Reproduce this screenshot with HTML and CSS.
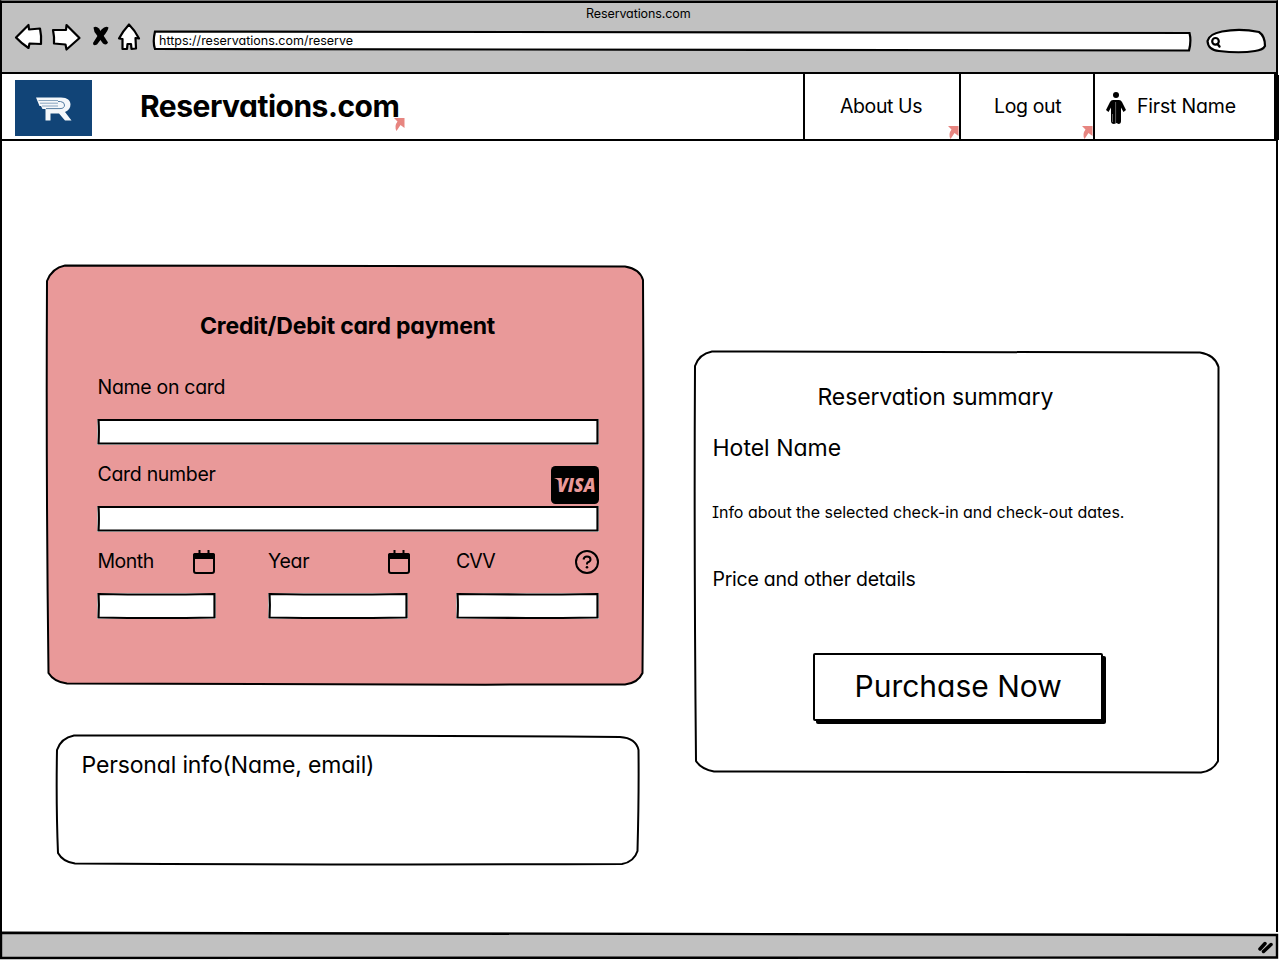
FILE: index.html
```html
<!DOCTYPE html>
<html lang="en">
<head>
<meta charset="utf-8">
<title>Reservations.com</title>
<link rel="stylesheet" href="styles.css">
</head>
<body>
<div class="window">
  <div class="toolbar">
    <div class="window-title"><span class="t-window">Reservations.com</span></div>
    <div class="controls">
      <svg class="nav-icons" width="130" height="34" viewBox="12 20 130 34">
        <g fill="#fff" stroke="#000" stroke-width="2.2" stroke-linejoin="round">
          <path d="M16 37.500 L28.500 25 L29 29.500 L40 28.500 Q41.500 35 41 44 L29.500 43.500 L28.500 48 Q21 43 16 37.500Z"/>
          <path d="M53 30 L66 30 L66.500 25 L79.500 38 L66.500 49.500 L65.500 44.500 L54 43.500 Q54.500 37 53 30Z"/>
          <path d="M129 24.500 Q135 30.500 139 38.500 L135.500 38 L136 48.500 L131.500 49 L131 44 L127.500 44 L127 49 L122.500 49 L122.500 39 L119 38.500 Q123 31 129 24.500Z"/>
        </g>
        <path d="M93.500 27.500 Q96 25.500 99 28.500 L108 42.500 Q106.500 46 103 43.500 L94.500 32Z"/>
        <path d="M108.500 27.500 Q108 31 103.500 36 L97 44.500 Q93 46.500 93 43 L101.500 29.500 Q105.500 25.500 108.500 27.500Z"/>
      </svg>
      <div class="address">
        <svg class="frame" viewBox="0 0 1040 22" preserveAspectRatio="none"><path d="M3 1.500 Q520 1 1037.500 3 Q1039.500 11 1037 20.500 Q520 20 3 19 Q.5 12 3 1.500Z" fill="#fff" stroke="#000" stroke-width="2.200"/></svg>
        <span class="t-url">https://reservations.com/reserve</span>
      </div>
      <svg class="search" width="62" height="28" viewBox="1205 27 62 28">
        <path d="M1222 31.500 Q1240 28 1259 32 Q1265 36 1265 46 Q1263 50 1255 51 Q1240 53.500 1219 51 Q1208 50 1207.500 41 Q1209 34 1222 31.500Z" fill="#fff" stroke="#000" stroke-width="2.200"/>
        <circle cx="1215.500" cy="41.300" r="3.300" fill="none" stroke="#000" stroke-width="2.200"/>
        <path d="M1217.500 44 L1219.500 46.500" stroke="#000" stroke-width="2.400" stroke-linecap="round"/>
      </svg>
    </div>
  </div>

  <header class="header">
    <svg class="logo" width="77" height="56" viewBox="15 80 77 56">
      <path d="M15 80H92V136H15Z" fill="#114477"/>
      <path d="M36 97.500H61C67.500 97.500 70.500 100.500 70.500 104.500C70.500 108 68.500 110.800 65 112L71.500 120.500H65L59 113.500H50.500V120.500H45.500V109H42.500L41 106H39.500Z" fill="#f4f7fa"/>
      <path d="M38.500 100.500H58M40 103.200H58M42 106H58" fill="none" stroke="#6f90b0" stroke-width=".8"/>
      <path d="M58 101.500H60.500Q64.500 102 64.500 105Q64.500 108.600 60 108.600H46" fill="none" stroke="#557da2" stroke-width="1"/>
    </svg>
    <a class="brand"><span class="t-brand">Reservations.com</span><svg class="link-mark" width="11" height="13" viewBox="0 0 11 13"><path d="M0 0H10.500V10L6.500 7L2.500 13Q0 8 3.500 3.500Z"/></svg></a>
    <nav class="menu">
      <a class="menu-item about"><span class="t-about">About Us</span><svg class="link-mark" width="11" height="13" viewBox="0 0 11 13"><path d="M0 0H10.500V10L6.500 7L2.500 13Q0 8 3.500 3.500Z"/></svg></a>
      <a class="menu-item logout"><span class="t-logout">Log out</span><svg class="link-mark" width="11" height="13" viewBox="0 0 11 13"><path d="M0 0H10.500V10L6.500 7L2.500 13Q0 8 3.500 3.500Z"/></svg></a>
      <a class="menu-item user">
        <svg width="20" height="33" viewBox="0 0 20 33"><circle cx="10" cy="3" r="3"/><path d="M7 8H13Q15 8 16 10L20 18L17.500 20L15 15.500V29Q15 32 12.500 32L10.500 31L8 32Q5 32 5 29V15.500L2.500 20L0 18L4 10Q5 8 7 8Z"/><path d="M9.600 10V31M6.500 22V30" stroke="#888" stroke-width=".7"/></svg>
        <span class="t-user">First Name</span>
      </a>
    </nav>
  </header>

  <main class="main">
    <div class="left">
      <section class="card payment">
        <svg class="frame" viewBox="0 0 599 421" preserveAspectRatio="none"><path d="M19 .5 Q300 0 579 1.500 Q594 4 597 15 Q598 200 596.500 408 Q592 418 579 419.500 Q300 420 21 418.500 Q8 417 2.500 408 Q0 210 1 16 Q6 3 19 .5Z" fill="#e99999" stroke="#000" stroke-width="2"/></svg>
        <h2 class="payment-title"><span class="t-credit">Credit/Debit card payment</span></h2>
        <div class="field">
          <div class="label"><span class="t-name">Name on card</span></div>
          <div class="input"><svg class="frame" viewBox="0 0 502 26" preserveAspectRatio="none"><path d="M0 0H502V26H0Z" fill="#fff"/><path d="M1.500 1 Q250 1.500 500.500 1 L500.500 24.500 Q250 25 1.500 24.500 Q2.200 12 1.500 1Z" fill="#fff" stroke="#000" stroke-width="2.200"/></svg></div>
        </div>
        <div class="field">
          <div class="label"><span class="t-number">Card number</span>
            <svg class="visa" width="48" height="38" viewBox="0 0 48 38"><rect width="48" height="38" rx="4.500"/><text x="6" y="25.500" textLength="38.500" lengthAdjust="spacingAndGlyphs">VISA</text><path d="M3 12H8.500L11.500 19Q8 13.500 3 12Z" fill="#e99999"/></svg>
          </div>
          <div class="input"><svg class="frame" viewBox="0 0 502 26" preserveAspectRatio="none"><path d="M0 0H502V26H0Z" fill="#fff"/><path d="M1.500 1 Q250 1.500 500.500 1 L500.500 24.500 Q250 25 1.500 24.500 Q2.200 12 1.500 1Z" fill="#fff" stroke="#000" stroke-width="2.200"/></svg></div>
        </div>
        <div class="row">
          <div class="field month">
            <div class="label"><span class="t-month">Month</span>
              <svg width="22" height="24" viewBox="0 0 22 24"><rect x="1" y="4" width="20" height="19" rx="2" fill="none" stroke="#000" stroke-width="2"/><path d="M0 8V5Q0 3 2 3H20Q22 3 22 5V9H0Z"/><path d="M6.500 0V4M15.500 0V4" stroke="#000" stroke-width="2"/></svg>
            </div>
            <div class="input"><svg class="frame" viewBox="0 0 119 26" preserveAspectRatio="none"><path d="M0 0H119V26H0Z" fill="#fff"/><path d="M1.500 1 Q60 2 117.500 1 L117.500 24.500 Q60 25.500 1.500 24.500 Q2.200 12 1.500 1Z" fill="#fff" stroke="#000" stroke-width="2.200"/></svg></div>
          </div>
          <div class="field year">
            <div class="label"><span class="t-year">Year</span>
              <svg width="22" height="24" viewBox="0 0 22 24"><rect x="1" y="4" width="20" height="19" rx="2" fill="none" stroke="#000" stroke-width="2"/><path d="M0 8V5Q0 3 2 3H20Q22 3 22 5V9H0Z"/><path d="M6.500 0V4M15.500 0V4" stroke="#000" stroke-width="2"/></svg>
            </div>
            <div class="input"><svg class="frame" viewBox="0 0 140 26" preserveAspectRatio="none"><path d="M0 0H140V26H0Z" fill="#fff"/><path d="M1.500 1 Q70 2 138.500 1 L138.500 24.500 Q70 25.500 1.500 24.500 Q2.200 12 1.500 1Z" fill="#fff" stroke="#000" stroke-width="2.200"/></svg></div>
          </div>
          <div class="field cvv">
            <div class="label"><span class="t-cvv">CVV</span>
              <svg width="24" height="24" viewBox="0 0 24 24"><circle cx="12" cy="12" r="11" fill="none" stroke="#000" stroke-width="2"/><path d="M8.500 9.500Q9 6.500 12 6.500Q15.500 6.500 15.500 9.500Q15.500 11.500 12.500 12.500Q12 13 12 14.500" fill="none" stroke="#000" stroke-width="2"/><circle cx="12" cy="17.300" r="1.300"/></svg>
            </div>
            <div class="input"><svg class="frame" viewBox="0 0 143 26" preserveAspectRatio="none"><path d="M0 0H143V26H0Z" fill="#fff"/><path d="M1.500 1 Q70 2 141.500 1 L141.500 24.500 Q70 25.500 1.500 24.500 Q2.200 12 1.500 1Z" fill="#fff" stroke="#000" stroke-width="2.200"/></svg></div>
          </div>
        </div>
      </section>
      <section class="card personal">
        <svg class="frame" viewBox="0 0 584 131" preserveAspectRatio="none"><path d="M18 .5 Q300 0 564 2 Q580 3 582.500 15 Q583 60 581.500 116 Q578 127 566 129 Q300 130 19 128.500 Q7 127 2 118 Q0 70 1 15 Q5 3 18 .5Z" fill="#fff" stroke="#000" stroke-width="2"/></svg>
        <span class="t-personal">Personal info(Name, email)</span>
      </section>
    </div>

    <section class="card summary">
      <svg class="frame" viewBox="0 0 526 423" preserveAspectRatio="none"><path d="M18 .5 Q250 0 506 1.500 Q521 4 524.500 16 Q525 200 524 410 Q519 420 507 421.500 Q250 422 20 420.500 Q7 418 2 410 Q0 200 1 15 Q5 3 18 .5Z" fill="#fff" stroke="#000" stroke-width="2"/></svg>
      <h2 class="summary-title"><span class="t-summary">Reservation summary</span></h2>
      <div class="hotel"><span class="t-hotel">Hotel Name</span></div>
      <p class="dates"><span class="t-dates">Info about the selected check-in and check-out dates.</span></p>
      <p class="price"><span class="t-price">Price and other details</span></p>
      <button class="purchase"><span class="t-purchase">Purchase Now</span></button>
    </section>
  </main>

  <footer class="statusbar">
    <svg class="frame" viewBox="0 0 1279 29" preserveAspectRatio="none"><path d="M1 .8 Q500 -1 1277 3 V25.500 Q700 25 1 26Z" fill="#c1c1c1" stroke="#000" stroke-width="2.400"/></svg>
    <svg class="grip" width="18" height="16" viewBox="0 0 18 16"><path d="M3 10L8 4.500M6.500 12.500L14 5.500" stroke="#000" stroke-width="3.500" stroke-linecap="round"/></svg>
  </footer>
</div>
</body>
</html>
```

FILE: styles.css
```css
* { box-sizing: border-box; }
body {
  margin: 0;
  height: 961px;
  overflow: hidden;
  background: #fff;
  color: #000;
  font-family: Inter, "Liberation Sans", sans-serif;
  font-feature-settings: "cv11", "cv08", "calt" 0;
  font-size: 19.5px;
  font-weight: 430;
}
h2, p { margin: 0; font-weight: 430; }
span { white-space: nowrap; }
.frame {
  position: absolute;
  inset: 0;
  width: 100%;
  height: 100%;
  z-index: -1;
  overflow: visible;
}
.window {
  display: flex;
  flex-direction: column;
  height: 961px;
}
.toolbar {
  height: 74px;
  border: 2px solid #000;
  border-top: 1px solid #777;
  background: #c1c1c1;
  box-shadow: inset 0 2px 0 #000;
  width: 1278px;
}
.window-title {
  height: 25px;
  padding-left: 584px;
  line-height: 26px;
  font-size: 12.5px;
  letter-spacing: -0.1px;
}
.controls {
  display: flex;
  align-items: flex-start;
  padding-left: 10px;
}
.nav-icons { margin-top: -6px; }
.address {
  position: relative;
  z-index: 0;
  width: 1040px;
  height: 22px;
  margin: 4px 13px 0 10px;
  padding-left: 7px;
  line-height: 21px;
  font-size: 12.5px;
}
.search { margin-top: 1px; }
.header {
  display: flex;
  height: 67px;
  width: 1278px;
  border-left: 2px solid #000;
  border-bottom: 2px solid #000;
}
.logo { margin: 6px 0 0 13px; }
.brand {
  position: relative;
  width: 266px;
  margin-left: 48px;
  line-height: 65px;
  font-size: 30px;
  font-weight: 650;
  letter-spacing: -0.5px;
}
.link-mark {
  position: absolute;
  right: 0;
  bottom: -1px;
  fill: #e78580;
}
.brand .link-mark { right: 1px; bottom: 8px; }
.menu {
  display: flex;
  margin-left: auto;
  border-left: 2px solid #000;
  border-right: 4px solid #000;
  box-shadow: 1px 1px 0 #000;
}
.menu-item {
  position: relative;
  display: flex;
  height: 65px;
  align-items: center;
  border-right: 2px solid #000;
}
.menu-item span { margin-top: -1px; }
.menu-item .link-mark { bottom: 0; }
.about { width: 156px; padding-left: 35px; letter-spacing: -0.4px; }
.logout { width: 134px; padding-left: 33px; letter-spacing: -0.35px; }
.user {
  width: 179px;
  padding-left: 11px;
  gap: 11px;
  border-right: 0;
  letter-spacing: -0.2px;
}
.user svg { margin-top: 3px; }
.main {
  display: flex;
  height: 791px;
  width: 1278px;
  border-left: 2px solid #000;
  border-right: 2px solid #000;
}
.card { position: relative; z-index: 0; }
.left { width: 599px; margin: 124px 0 0 44px; }
.payment { height: 421px; padding: 46px 46px 0 51px; }
.payment-title {
  height: 30px;
  margin-bottom: 34px;
  padding-left: 103px;
  font-size: 23px;
  font-weight: 650;
  line-height: 30px;
  letter-spacing: -0.18px;
}
.label {
  position: relative;
  display: flex;
  justify-content: space-between;
  height: 24px;
  line-height: 24px;
  letter-spacing: -0.3px;
}
.input { position: relative; z-index: 0; height: 26px; margin: 20px 0 17px; }
.visa { position: absolute; right: 0; top: 4px; }
.visa text {
  fill: #e99999;
  font: italic 800 18.5px "Open Sans", sans-serif;
  letter-spacing: 0;
}
.t-name, .t-number, .t-month { padding-left: 0.5px; }
.t-month { letter-spacing: -0.5px; }
.t-cvv { letter-spacing: -0.9px; }
.row { display: flex; }
.row .label svg { margin-top: 1px; }
.month { width: 119px; margin-right: 52px; }
.month .label { padding-right: 1px; }
.year { width: 140px; margin-right: 48px; }
.year .label { margin-right: -2px; }
.cvv { width: 143px; }
.personal {
  width: 584px;
  height: 131px;
  margin: 49px 0 0 10px;
  padding: 15px 0 0 25.5px;
  font-size: 23px;
  line-height: 30px;
  letter-spacing: -0.15px;
}
.summary {
  width: 526px;
  height: 423px;
  margin: 210px 0 0 49px;
  padding: 31px 0 0 18px;
}
.summary-title {
  height: 30px;
  padding-left: 105.5px;
  font-size: 23px;
  line-height: 30px;
  letter-spacing: -0.12px;
}
.hotel { margin-top: 21px; padding-left: 0.5px; font-size: 23px; line-height: 30px; }
.dates { margin-top: 37px; font-size: 16px; line-height: 24px; letter-spacing: -0.03px; }
.price { margin-top: 43px; padding-left: 0.5px; line-height: 24px; letter-spacing: -0.25px; }
.purchase {
  display: block;
  width: 290px;
  height: 68px;
  margin: 62px 0 0 101px;
  padding: 0 0 3px 39.5px;
  border: 2px solid #000;
  border-radius: 2px;
  background: #fff;
  box-shadow: 3px 3px 0 #000;
  color: #000;
  font: inherit;
  font-feature-settings: inherit;
  font-size: 30px;
  text-align: left;
}
.statusbar {
  position: relative;
  z-index: 0;
  display: flex;
  justify-content: flex-end;
  height: 29px;
}
.grip { margin: 7px 4px 0 0; }
```
